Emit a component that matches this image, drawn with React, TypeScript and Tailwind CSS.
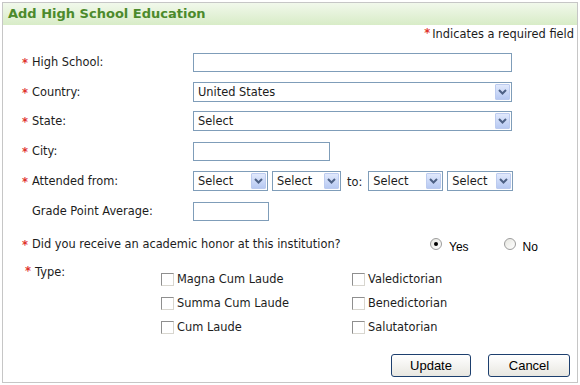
import React from 'react';

// Small chevron used on the right of every drop-down
const Chevron = () => (
    <svg width="9" height="6" viewBox="0 0 9 6">
        <path d="M1 1 L4.5 4.5 L8 1" fill="none" stroke="#4d6185" strokeWidth="2" />
    </svg>
);

const FakeSelect: React.FC<{ value: string; width: string }> = ({ value, width }) => (
    <div className={`${width} h-[20px] border border-[#7f9db9] bg-white flex items-center justify-between pl-[4px] pr-[1px]`}>
        <span className="leading-none pt-[2px]">{value}</span>
        <span className="w-[15px] h-[16px] bg-linear-to-b from-[#e1e9fc] to-[#b7c9f2] border border-[#bccbef] rounded-[1px] flex items-center justify-center">
            <Chevron />
        </span>
    </div>
);

const TextInput: React.FC<{ width: string }> = ({ width }) => (
    <div className={`${width} h-[19px] border border-[#7f9db9] bg-white`} />
);

const Asterisk = () => <span className="text-[#e0342c] font-bold leading-none self-start mt-[2px]">*</span>;

const Row: React.FC<{ label: string; required?: boolean; height: string; children: React.ReactNode }> = ({
    label,
    required,
    height,
    children,
}) => (
    <div className={`flex items-center pl-[19px] ${height}`}>
        <div className="w-[171px] flex items-center pt-[2px]">
            <span className="w-[10px] flex">{required && <Asterisk />}</span>
            <span>{label}</span>
        </div>
        {children}
    </div>
);

const Radio: React.FC<{ checked?: boolean; label: string }> = ({ checked, label }) => (
    <div className="flex items-center">
        <span className="w-[12px] h-[12px] rounded-full border border-[#9c9c9c] bg-linear-to-br from-[#e6e6e0] to-white flex items-center justify-center">
            {checked && <span className="w-[4px] h-[4px] rounded-full bg-black" />}
        </span>
        <span className="ml-[7px] mt-[5px] font-['Liberation_Sans',sans-serif] text-[12px] text-black">{label}</span>
    </div>
);

const Checkbox: React.FC<{ label: string }> = ({ label }) => (
    <div className="h-[24px] flex items-center">
        <span className="w-[13px] h-[13px] border border-[#8f8f8f] border-r-[#d8d6cf] border-b-[#d8d6cf] bg-white" />
        <span className="ml-[3px] pt-[1px]">{label}</span>
    </div>
);

const Button: React.FC<{ label: string; width: string }> = ({ label, width }) => (
    <button
        className={`${width} h-[23px] border border-[#1d3f6e] rounded-[3px] bg-linear-to-b from-white to-[#e8e7e1] font-['Liberation_Sans',sans-serif] text-[13px] text-black`}
    >
        {label}
    </button>
);

export default function App() {
    return (
        <div className="w-[580px] h-[385px] bg-white pl-[2px] pt-[2px] font-['DejaVu_Sans',sans-serif] text-[11.4px] text-[#1c1c1c]">
            <div className="w-[576px] h-[381px] border border-[#c6c6c6] flex flex-col">
                {/* Header */}
                <div className="h-[22px] bg-linear-to-b from-[#f1f8eb] to-[#d8ecc7] flex items-center pl-[5px] text-[13px] font-bold text-[#4c8a2c]">
                    Add High School Education
                </div>

                {/* Required note */}
                <div className="h-[18px] flex items-center justify-end pr-[3px] pt-[1px]">
                    <Asterisk />
                    <span className="ml-[2px]">Indicates a required field</span>
                </div>

                <div className="mt-[4px] flex flex-col">
                    <Row label="High School:" required height="h-[30px]">
                        <TextInput width="w-[319px]" />
                    </Row>
                    <Row label="Country:" required height="h-[29px]">
                        <FakeSelect value="United States" width="w-[319px]" />
                    </Row>
                    <Row label="State:" required height="h-[30px]">
                        <FakeSelect value="Select" width="w-[319px]" />
                    </Row>
                    <Row label="City:" required height="h-[30px]">
                        <TextInput width="w-[137px]" />
                    </Row>
                    <Row label="Attended from:" required height="h-[30px]">
                        <div className="flex items-center gap-[4px]">
                            <FakeSelect value="Select" width="w-[75px]" />
                            <FakeSelect value="Select" width="w-[69px]" />
                            <span className="mx-[2px] mt-[4px]">to:</span>
                            <FakeSelect value="Select" width="w-[75px]" />
                            <FakeSelect value="Select" width="w-[66px]" />
                        </div>
                    </Row>
                    <Row label="Grade Point Average:" height="h-[30px]">
                        <TextInput width="w-[76px]" />
                    </Row>
                </div>

                {/* Honor question */}
                <div className="h-[36px] flex items-center pl-[19px]">
                    <span className="w-[10px] flex pt-[2px]">
                        <Asterisk />
                    </span>
                    <span className="w-[398px] pt-[2px]">Did you receive an academic honor at this institution?</span>
                    <Radio checked label="Yes" />
                    <div className="ml-[35px]">
                        <Radio label="No" />
                    </div>
                </div>

                {/* Type */}
                <div className="flex pl-[22px]">
                    <div className="w-[136px] flex pt-[2px]">
                        <span className="w-[10px] flex">
                            <Asterisk />
                        </span>
                        <span>Type:</span>
                    </div>
                    <div className="mt-[5px] flex">
                        <div className="w-[191px] flex flex-col">
                            <Checkbox label="Magna Cum Laude" />
                            <Checkbox label="Summa Cum Laude" />
                            <Checkbox label="Cum Laude" />
                        </div>
                        <div className="flex flex-col">
                            <Checkbox label="Valedictorian" />
                            <Checkbox label="Benedictorian" />
                            <Checkbox label="Salutatorian" />
                        </div>
                    </div>
                </div>

                {/* Actions */}
                <div className="mt-[15px] flex justify-end pr-[7px] gap-[17px]">
                    <Button label="Update" width="w-[80px]" />
                    <Button label="Cancel" width="w-[82px]" />
                </div>
            </div>
        </div>
    );
}
